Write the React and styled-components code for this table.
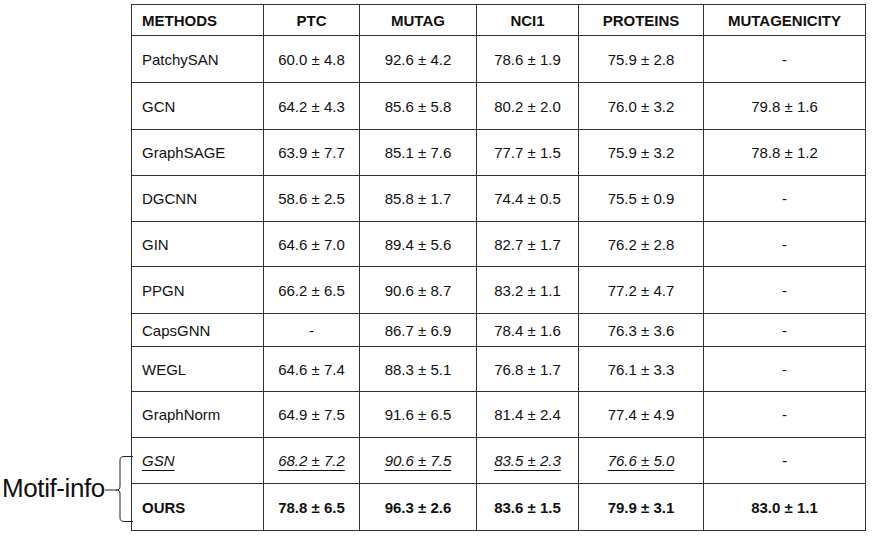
import React from "react";
import styled, { createGlobalStyle } from "styled-components";

const GlobalStyle = createGlobalStyle`
  html, body {
    margin: 0;
    padding: 0;
    background: #fff;
  }
  body {
    font-family: "Liberation Sans", Arial, sans-serif;
    color: #111;
  }
`;

const Page = styled.div`
  width: 880px;
  height: 543px;
  display: flex;
  align-items: flex-end;
  padding-bottom: 12px;
  box-sizing: border-box;
`;

const Annotation = styled.div`
  width: 131px;
  flex: 0 0 131px;
  display: flex;
  align-items: flex-start;
  padding-left: 2px;
  padding-bottom: 8px;
  box-sizing: border-box;
`;

const Label = styled.span`
  font-family: "Liberation Sans", Arial, sans-serif;
  font-size: 26px;
  letter-spacing: -0.4px;
  line-height: 1;
  color: #111;
  white-space: nowrap;
  margin-top: 20px;
`;

const Brace = styled.svg`
  flex: 0 0 auto;
  display: block;
  margin-left: auto;
`;

const Table = styled.table`
  border-collapse: collapse;
  table-layout: fixed;
  width: 734px;
  color: #111;

  & td,
  & th {
    border: 1px solid #333;
    padding: 0 10px;
    font-family: "Liberation Sans", Arial, sans-serif;
    font-size: 15px;
    text-align: center;
    vertical-align: middle;
    white-space: nowrap;
  }

  & td:first-child,
  & th:first-child {
    text-align: left;
  }
`;

const HeadCell = styled.th`
  font-weight: bold;
  height: 30px;
`;

const Row = styled.tr`
  height: ${(p) => p.h}px;

  & td {
    font-weight: ${(p) => (p.bold ? "bold" : "normal")};
    font-style: ${(p) => (p.italic ? "italic" : "normal")};
  }
`;

const Marked = styled.span`
  text-decoration: underline;
  text-underline-offset: 4px;
  text-decoration-thickness: 1px;
`;

const columns = [
  { name: "METHODS", width: 132 },
  { name: "PTC", width: 96 },
  { name: "MUTAG", width: 117 },
  { name: "NCI1", width: 102 },
  { name: "PROTEINS", width: 125 },
  { name: "MUTAGENICITY", width: 162 },
];

const rows = [
  { h: 47, cells: ["PatchySAN", "60.0 ± 4.8", "92.6 ± 4.2", "78.6 ± 1.9", "75.9 ± 2.8", "-"] },
  { h: 47, cells: ["GCN", "64.2 ± 4.3", "85.6 ± 5.8", "80.2 ± 2.0", "76.0 ± 3.2", "79.8 ± 1.6"] },
  { h: 46, cells: ["GraphSAGE", "63.9 ± 7.7", "85.1 ± 7.6", "77.7 ± 1.5", "75.9 ± 3.2", "78.8 ± 1.2"] },
  { h: 46, cells: ["DGCNN", "58.6 ± 2.5", "85.8 ± 1.7", "74.4 ± 0.5", "75.5 ± 0.9", "-"] },
  { h: 45, cells: ["GIN", "64.6 ± 7.0", "89.4 ± 5.6", "82.7 ± 1.7", "76.2 ± 2.8", "-"] },
  { h: 47, cells: ["PPGN", "66.2 ± 6.5", "90.6 ± 8.7", "83.2 ± 1.1", "77.2 ± 4.7", "-"] },
  { h: 33, cells: ["CapsGNN", "-", "86.7 ± 6.9", "78.4 ± 1.6", "76.3 ± 3.6", "-"] },
  { h: 45, cells: ["WEGL", "64.6 ± 7.4", "88.3 ± 5.1", "76.8 ± 1.7", "76.1 ± 3.3", "-"] },
  { h: 46, cells: ["GraphNorm", "64.9 ± 7.5", "91.6 ± 6.5", "81.4 ± 2.4", "77.4 ± 4.9", "-"] },
  { h: 46, italic: true, cells: ["GSN", "68.2 ± 7.2", "90.6 ± 7.5", "83.5 ± 2.3", "76.6 ± 5.0", "-"] },
  { h: 47, bold: true, cells: ["OURS", "78.8 ± 6.5", "96.3 ± 2.6", "83.6 ± 1.5", "79.9 ± 3.1", "83.0 ± 1.1"] },
];

const App = () => (
  <>
    <GlobalStyle />
    <Page>
      <Annotation>
        <Label>Motif-info</Label>
        <Brace width="28" height="68" viewBox="0 0 28 68">
          <path
            d="M0 35 L11 35 C14 35 15 34 15 31 L15 5 C15 2 17 1.5 20 1.5 L28 1.5 M11 35 C14 35 15 36 15 39 L15 63 C15 66 17 66.5 20 66.5 L28 66.5"
            fill="none"
            stroke="#222"
            strokeWidth="1"
          />
        </Brace>
      </Annotation>
      <Table>
        <colgroup>
          {columns.map((c) => (
            <col key={c.name} style={{ width: c.width }} />
          ))}
        </colgroup>
        <thead>
          <tr>
            {columns.map((c) => (
              <HeadCell key={c.name}>{c.name}</HeadCell>
            ))}
          </tr>
        </thead>
        <tbody>
          {rows.map((r) => (
            <Row key={r.cells[0]} h={r.h} bold={r.bold} italic={r.italic}>
              {r.cells.map((v, i) => (
                <td key={i}>
                  {r.italic && v !== "-" ? <Marked>{v}</Marked> : v}
                </td>
              ))}
            </Row>
          ))}
        </tbody>
      </Table>
    </Page>
  </>
);

export default App;
